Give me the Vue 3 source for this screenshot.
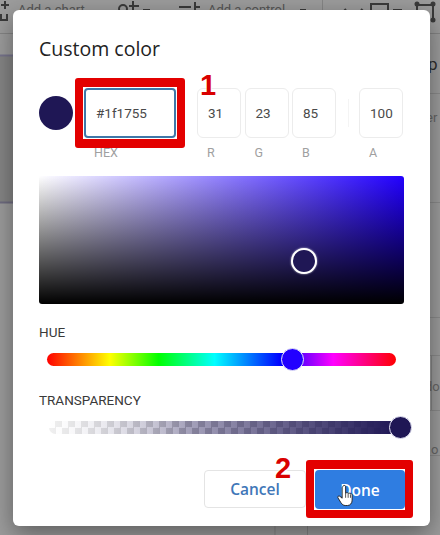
<template>
  <div class="page">
    <!-- dimmed report editor behind the dialog -->
    <svg class="backdrop" width="440" height="535" viewBox="0 0 440 535" fill="none">
      <path d="M0 33.500H440" stroke="#848484" />
      <rect x="0" y="55" width="14" height="147" fill="#858585" />
      <path d="M0 55.500H14" stroke="#77748c" stroke-width="2" />
      <path d="M0 202.500H14" stroke="#6f6c80" stroke-width="2" />
      <path d="M430 93.500H440M430 202.500H440M430 317.500H440M430 355.500H440M430 410.500H440M430 455.500H440" stroke="#8a8a8a" />
      <path d="M431.500 355V410M275 526V535M307.500 526V535M322.500 0V10" stroke="#858585" />
      <g stroke="#3a3a3a" stroke-width="2">
        <path d="M5 1V9M1 5H9M1 14V20H7V14" />
        <circle cx="123" cy="9" r="4" />
        <path d="M129 6H139M133 1V11M143 10H150M179 7H191M194 7H200M195 2V12M300 10H306" />
      </g>
      <g stroke="#3a3a3a" stroke-width="2">
        <path d="M340 15L346 9M361 9L367 15M371 10V4H388V10M393 10H402" />
        <path d="M417 5H433M417 5V10M433 5V20" />
        <circle cx="417" cy="4" r="1.500" fill="#3a3a3a" />
        <circle cx="433" cy="4" r="1.500" fill="#3a3a3a" />
        <circle cx="433" cy="20" r="1.500" fill="#3a3a3a" />
      </g>
    </svg>
    <span class="bg-text t1">Add a chart</span>
    <span class="bg-text t2">Add a control</span>
    <span class="bg-text s1">p</span>
    <span class="bg-text s2">er</span>
    <span class="bg-text s3">do</span>
    <span class="bg-text s4">o</span>

    <div class="dialog">
      <h2 class="title">Custom color</h2>

      <div class="inputs">
        <div class="swatch"></div>
        <div class="field hex">
          <div class="box">#1f1755</div>
          <label>HEX</label>
        </div>
        <div class="rgb">
          <div v-for="c in channels" :key="c.label" class="field">
            <div class="box small">{{ c.value }}</div>
            <label>{{ c.label }}</label>
          </div>
        </div>
        <div class="divider"></div>
        <div class="field">
          <div class="box small">100</div>
          <label>A</label>
        </div>
      </div>

      <div class="picker">
        <div class="picker-handle"></div>
      </div>

      <div class="slider-label hue-label">HUE</div>
      <div class="slider hue">
        <div class="thumb hue-thumb"></div>
      </div>

      <div class="slider-label trans-label">TRANSPARENCY</div>
      <div class="slider trans">
        <div class="thumb trans-thumb"></div>
      </div>

      <div class="actions">
        <button class="btn cancel">Cancel</button>
        <button class="btn done">Done</button>
      </div>
    </div>

    <!-- tutorial annotations -->
    <div class="mark mark-hex"></div>
    <div class="mark mark-done"></div>
    <div class="step step-1">1</div>
    <div class="step step-2">2</div>
    <svg class="hand" width="20" height="27" viewBox="0 0 26 30">
      <path d="M9 3c1-1.500 3-1.500 3.500 0.500V12l1-0.500c1-0.500 2 0 2.300 0.700 1-0.700 2.300-0.300 2.700 0.600 1-0.500 2.500 0 2.500 1.700V21c0 4-2.500 7-6 7h-3c-2.500 0-4-1.500-5.500-3.500L2.500 18c-1-1.500 1-3.300 2.500-2l3 2.500V5c0-1 0.500-1.500 1-2z" fill="#fff" stroke="#222" stroke-width="1.200" />
      <path d="M12.500 12v6M15.800 12.500V18M18.800 13.500V18" stroke="#222" stroke-width="1" fill="none" />
    </svg>
  </div>
</template>

<script setup>
const channels = [
  { label: 'R', value: 31 },
  { label: 'G', value: 23 },
  { label: 'B', value: 85 },
]
</script>

<style>
html, body {
  margin: 0;
  background: #9c9c9c;
}
</style>

<style scoped>
.page {
  position: relative;
  width: 440px;
  height: 535px;
  overflow: hidden;
  background: #9c9c9c;
  font-family: Roboto, "Liberation Sans", sans-serif;
}
.backdrop {
  position: absolute;
  left: 0;
  top: 0;
}
.bg-text {
  position: absolute;
  font-size: 13px;
  color: #555;
}
.t1 { left: 18px; top: 2px; }
.t2 { left: 208px; top: 2px; }
.s1 { left: 428px; top: 54px; font-size: 17px; color: #2e2e2e; }
.s2 { left: 426px; top: 110px; color: #666; }
.s3 { left: 425px; top: 379px; color: #666; }
.s4 { left: 431px; top: 442px; color: #666; }
.dialog {
  position: absolute;
  left: 13px;
  top: 10px;
  width: 417px;
  height: 516px;
  box-sizing: border-box;
  padding: 27px 26px 0;
  background: #fff;
  border-radius: 6px;
  box-shadow: 0 8px 24px rgba(0, 0, 0, 0.4);
}
.title {
  margin: 0;
  font-family: "Open Sans", Roboto, sans-serif;
  font-size: 19.500px;
  font-weight: 400;
  line-height: 24px;
  color: #222;
}
.inputs {
  display: flex;
  margin-top: 27px;
}
.swatch {
  width: 34px;
  height: 34px;
  margin-top: 8px;
  border-radius: 50%;
  background: #1f1755;
}
.field {
  display: flex;
  flex-direction: column;
}
.field label {
  margin-top: 8px;
  padding-left: 10px;
  font-size: 12.500px;
  line-height: 14px;
  color: #a0a0a0;
}
.hex {
  margin-left: 11px;
  margin-right: 21px;
}
.box {
  width: 92px;
  height: 50px;
  box-sizing: border-box;
  padding-left: 10px;
  display: flex;
  align-items: center;
  border: 2px solid #3f77a8;
  border-radius: 4px;
  background: #fff;
  font-size: 13.500px;
  color: #4a4a4a;
}
.box.small {
  width: 44px;
  border: 1px solid #ececec;
  border-radius: 6px;
}
.rgb {
  display: flex;
  gap: 3.500px;
}
.divider {
  width: 1px;
  height: 28px;
  margin: 11px 10px 0 12px;
  background: #f4f4f4;
}
.picker {
  position: relative;
  width: 365px;
  height: 128px;
  margin-top: 16px;
  border-radius: 3px;
  background:
    linear-gradient(to bottom, rgba(0, 0, 0, 0), #000),
    linear-gradient(to right, #fff, #2200ff);
}
.picker-handle {
  position: absolute;
  left: 252px;
  top: 72px;
  width: 22px;
  height: 22px;
  border: 2px solid #fff;
  border-radius: 50%;
  background: #1f1755;
  box-shadow: 0 0 2px rgba(255, 255, 255, 0.8);
}
.slider-label {
  font-size: 13.500px;
  line-height: 14px;
  color: #3a3a3a;
}
.hue-label {
  margin-top: 21px;
}
.slider {
  position: relative;
  width: 349px;
  height: 13px;
  margin-top: 14px;
  margin-left: 8px;
  border-radius: 7px;
}
.hue {
  background: linear-gradient(to right, #f00 0%, #ff0 18%, #0f0 32%, #0ff 48%, #00f 67%, #f0f 82%, #f00 100%);
}
.trans-label {
  margin-top: 27px;
}
.trans {
  width: 347px;
  margin-left: 10px;
  background:
    linear-gradient(to right, rgba(255, 255, 255, 0.7), rgba(255, 255, 255, 0) 40%),
    linear-gradient(to right, rgba(31, 23, 85, 0), #1f1755),
    repeating-conic-gradient(#ccc 0 25%, #fff 0 50%) 0 0 / 13px 13px;
}
.thumb {
  position: absolute;
  top: -5px;
  width: 21px;
  height: 21px;
  border: 1px solid #e4e4f4;
  border-radius: 50%;
}
.hue-thumb {
  left: 234px;
  background: #2200ff;
}
.trans-thumb {
  left: 340px;
  background: #1f1755;
}
.actions {
  display: flex;
  justify-content: flex-end;
  align-items: flex-start;
  gap: 9px;
  margin-top: 36px;
  margin-right: -1px;
}
.btn {
  height: 39px;
  padding: 0;
  border-radius: 4px;
  font-family: "Open Sans", Roboto, sans-serif;
  font-size: 15.500px;
  font-weight: 600;
}
.cancel {
  width: 102px;
  height: 38px;
  background: #fff;
  border: 1px solid #e4e4e4;
  color: #3f77b8;
}
.done {
  width: 90px;
  background: #2f7de1;
  border: none;
  color: #fff;
}
.mark {
  position: absolute;
  box-sizing: border-box;
  border-style: solid;
  border-color: #e30000;
  border-radius: 3px;
}
.mark-hex {
  left: 75px;
  top: 78px;
  width: 110px;
  height: 70px;
  border-width: 9px 8px;
}
.mark-done {
  left: 306px;
  top: 460px;
  width: 107px;
  height: 58px;
  border-width: 9px 8px 8px;
}
.step {
  position: absolute;
  font-family: "Liberation Sans", sans-serif;
  font-weight: 700;
  font-size: 29px;
  line-height: 30px;
  color: #d90000;
  text-shadow: 0 0 2px #fff, 1px 1px 1px #fff;
}
.step-1 { left: 200px; top: 70px; }
.step-2 { left: 275px; top: 453px; }
.hand {
  position: absolute;
  left: 336px;
  top: 482px;
}
</style>
